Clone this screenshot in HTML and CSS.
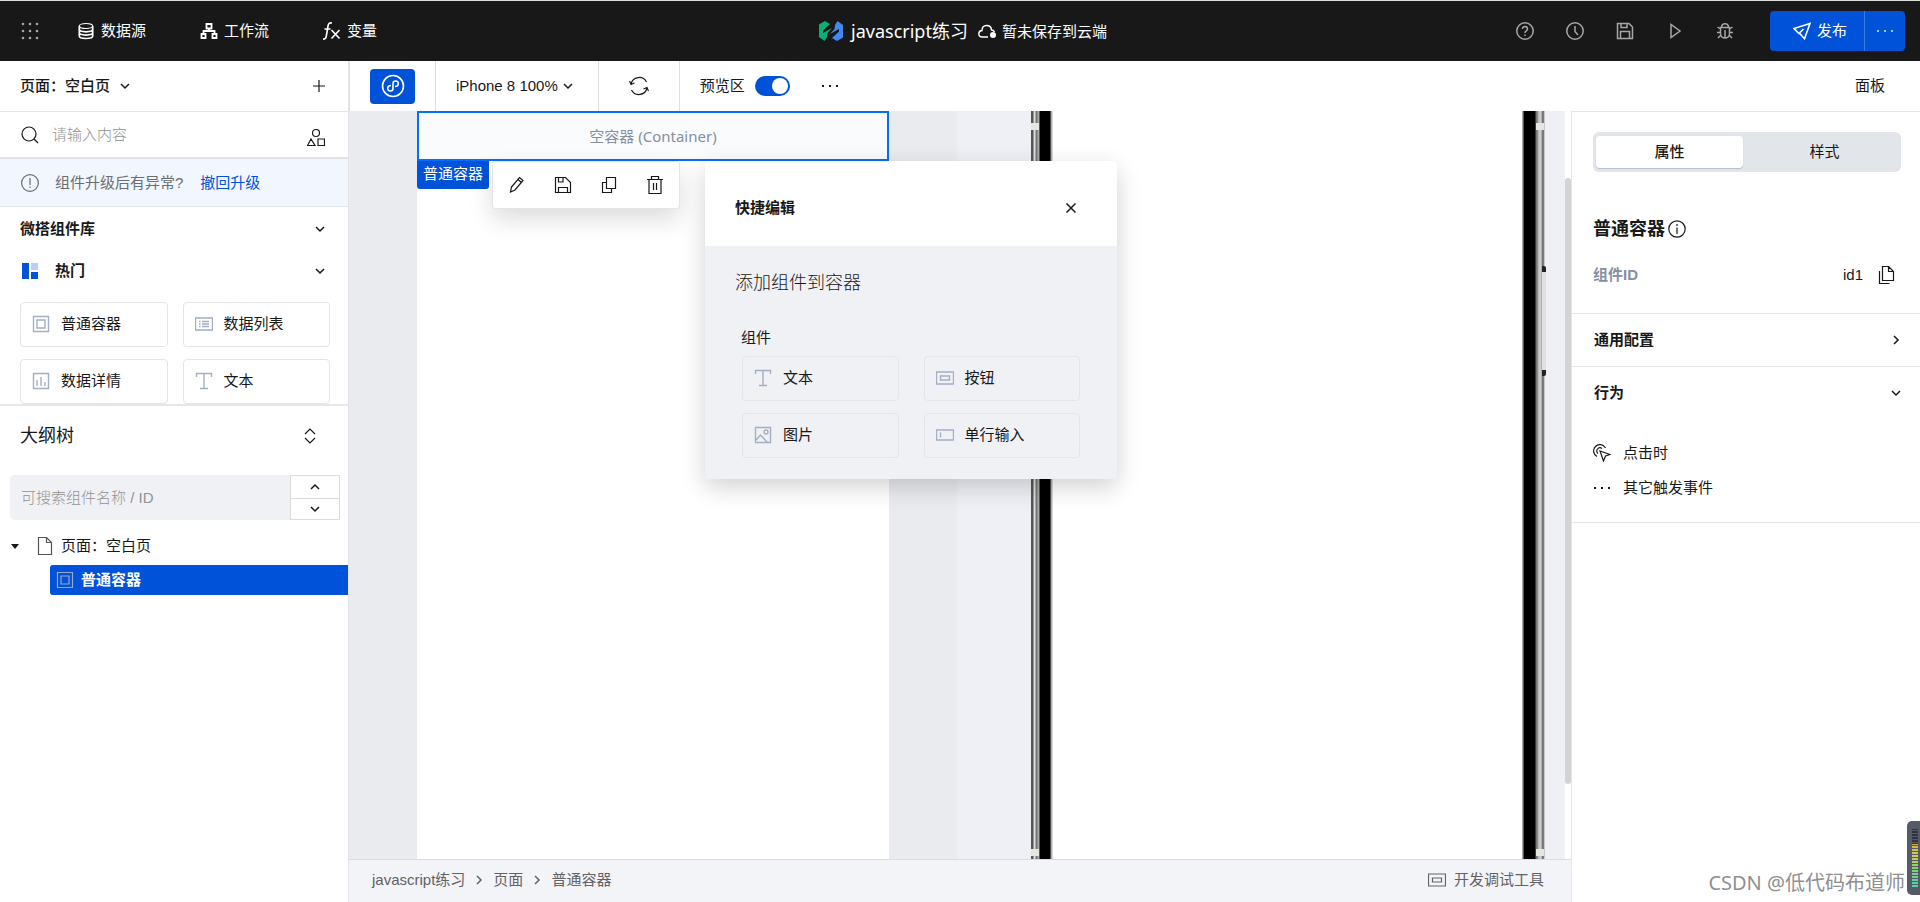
FILE: index.html
```html
<!DOCTYPE html>
<html lang="zh-CN">
<head>
<meta charset="utf-8">
<meta name="viewport" content="width=device-width, initial-scale=1">
<title>javascript练习</title>
<link rel="stylesheet" href="styles.css">
</head>
<body>
<svg class="sprite" aria-hidden="true">
  <symbol id="i-down" viewBox="0 0 10 10"><path d="M1 3l4 4 4-4"/></symbol>
  <symbol id="i-up" viewBox="0 0 10 10"><path d="M1 7l4-4 4 4"/></symbol>
  <symbol id="i-right" viewBox="0 0 10 10"><path d="M3 1l4 4-4 4"/></symbol>
  <symbol id="i-more" viewBox="0 0 18 18"><g fill="currentColor" stroke="none"><rect x="1" y="8" width="2" height="2"/><rect x="8" y="8" width="2" height="2"/><rect x="15" y="8" width="2" height="2"/></g></symbol>
  <symbol id="i-save" viewBox="0 0 18 18"><path d="M1.500 1.500h11.500l3.500 3.500v11.500h-15zM5 1.500v4h6v-4M4.500 16.500v-7h9v7"/></symbol>
  <symbol id="i-box" viewBox="0 0 18 18"><path d="M1.500 1.500h15v15h-15zM5 5h8v8H5z"/></symbol>
  <symbol id="i-text" viewBox="0 0 18 18"><path d="M1.500 5V1.500h15V5M9 1.500v15M5 16.500h8"/></symbol>
  <symbol id="i-list" viewBox="0 0 18 18"><path d="M.5 3h17v12H.5zM7 6.500h7M7 9h7M7 11.500h7M4 6.500h1.500M4 9h1.500M4 11.500h1.500"/></symbol>
  <symbol id="i-chart" viewBox="0 0 18 18"><path d="M1.500 1.500h15v15h-15zM5 14V8M9 14V5M13 14v-4"/></symbol>
  <symbol id="i-button" viewBox="0 0 18 18"><path d="M.5 3h17v12H.5zM4.500 7h9v4h-9z"/></symbol>
  <symbol id="i-image" viewBox="0 0 18 18"><path d="M1.500 1.500h15v15h-15zM2 14l4.500-5 7 7.500"/><circle cx="12" cy="6" r="2"/></symbol>
  <symbol id="i-input" viewBox="0 0 18 18"><path d="M.5 4h17v10H.5zM4.500 6.500v5"/></symbol>
</svg>

<header class="topbar">
  <nav class="topbar-nav" aria-label="主导航">
    <button class="plain muted" aria-label="应用"><svg class="icon" viewBox="0 0 18 18"><g fill="currentColor" stroke="none"><circle cx="2" cy="2" r="1.300"/><circle cx="9" cy="2" r="1.300"/><circle cx="16" cy="2" r="1.300"/><circle cx="2" cy="9" r="1.300"/><circle cx="9" cy="9" r="1.300"/><circle cx="16" cy="9" r="1.300"/><circle cx="2" cy="16" r="1.300"/><circle cx="9" cy="16" r="1.300"/><circle cx="16" cy="16" r="1.300"/></g></svg></button>
    <a href="#data"><svg class="icon" viewBox="0 0 18 18"><ellipse cx="9" cy="4" rx="6.700" ry="2.500"/><path stroke-width="1.700" d="M2.300 4v10c0 3.300 13.400 3.300 13.400 0V4M2.300 7.300c0 3.300 13.400 3.300 13.400 0M2.300 10.600c0 3.300 13.400 3.300 13.400 0"/></svg>数据源</a>
    <a href="#flow"><svg class="icon" viewBox="0 0 18 18"><path stroke-width="1.800" d="M6.500 2h5v4.500h-5zM1.500 12h4v4h-4zM12.500 12h4v4h-4zM9 6.500V9M3.500 12V9h11v3"/></svg>工作流</a>
    <a href="#var"><svg class="icon" viewBox="0 0 18 18"><path stroke-width="1.600" d="M0 17c2.500.5 3-1 3.500-4L5 4c.4-2.500 1.500-3.500 4-3M1.500 7h6M8.500 8l8 8.500M16.500 8l-8 8.500"/></svg>变量</a>
  </nav>
  <div class="topbar-title">
    <svg class="logo" viewBox="0 0 24 20"><path fill="#07b078" d="M0 3.500L6 0l5 3-7 6.500v2.500l9-5-4.500 5L8 16l-2.500 4L0 16z"/><path fill="#4288f0" d="M24 16.500L18 20l-5-3 7-6.500V8l-9 5 4.500-5L16 4l2.500-4L24 4z"/></svg>
    <h1>javascript练习</h1>
    <svg class="icon cloud" viewBox="0 0 18 18"><path stroke-width="1.400" d="M10 15H4C-.5 15 0 8.500 4 8.500 4 2 13 2 13.500 8c1.500 0 2.500.8 3 2"/><circle cx="15" cy="13" r="3" fill="currentColor" stroke="none"/></svg>
    <span>暂未保存到云端</span>
  </div>
  <div class="topbar-actions">
    <button class="plain" aria-label="帮助"><svg class="icon" viewBox="0 0 18 18"><circle cx="9" cy="9" r="8.200"/><path d="M6.500 7c0-3.500 5-3.200 5 0 0 2-2.500 1.800-2.500 4M9 12.500v1.500"/></svg></button>
    <button class="plain" aria-label="历史"><svg class="icon" viewBox="0 0 18 18"><circle cx="9" cy="9" r="8.200"/><path d="M9 4v5.500l3 3.500"/></svg></button>
    <button class="plain" aria-label="保存"><svg class="icon"><use href="#i-save"/></svg></button>
    <button class="plain" aria-label="运行"><svg class="icon" viewBox="0 0 18 18"><path d="M5 2.500v13l9-6.500z"/></svg></button>
    <button class="plain" aria-label="调试"><svg class="icon" viewBox="0 0 18 18"><path d="M5.500 5.500c0-5 7-5 7 0M4.500 5.500h9v6c0 6-9 6-9 0zM9 8v8M4.500 7L1.500 5M13.500 7l3-2M1 10.500h3.500M13.500 10.500H17M5 13l-3 3M13 13l3 3"/></svg></button>
    <div class="publish">
      <button><svg class="icon" viewBox="0 0 18 18"><path stroke-width="1.600" d="M17 1.500L1 6.500l5 5 1 .2 4.500 5zM6 11.500l4.500-4.500"/></svg>发布</button>
      <button aria-label="更多发布选项"><svg class="icon"><use href="#i-more"/></svg></button>
    </div>
  </div>
</header>

<div class="workspace">
  <aside class="sidebar">
    <div class="page-select">
      <button class="plain strong">页面：空白页<svg class="icon-s"><use href="#i-down"/></svg></button>
      <button class="plain" aria-label="新建页面"><svg class="icon-m" viewBox="0 0 12 12"><path d="M6 0v12M0 6h12"/></svg></button>
    </div>
    <div class="lib-search">
      <svg class="icon" viewBox="0 0 18 18"><circle cx="8" cy="8" r="7"/><path d="M13 13l4 4"/></svg>
      <input type="text" placeholder="请输入内容" aria-label="搜索组件">
      <button class="plain" aria-label="组件分类"><svg class="icon" viewBox="0 0 18 18"><circle cx="9" cy="4" r="3.500"/><path d="M.5 16.500L4 10l4 6.500zM11 10h6.500v6.500H11z"/></svg></button>
    </div>
    <div class="notice">
      <svg class="icon" viewBox="0 0 18 18"><circle cx="9" cy="9" r="8.400"/><path d="M9 4v7M9 12.500V14"/></svg>
      <span>组件升级后有异常?</span><a href="#revert">撤回升级</a>
    </div>
    <section class="library">
      <h2>微搭组件库<svg class="icon-s"><use href="#i-down"/></svg></h2>
      <h3><svg class="hot" viewBox="0 0 16 16"><path fill="#0052d9" d="M0 0h7v16H0zM9 9h7v7H9z"/><path fill="#b9d0ff" d="M9 0h7v7H9z"/></svg><span>热门</span><svg class="icon-s"><use href="#i-down"/></svg></h3>
      <div class="cards">
        <button class="card"><svg class="icon"><use href="#i-box"/></svg>普通容器</button>
        <button class="card"><svg class="icon"><use href="#i-list"/></svg>数据列表</button>
        <button class="card"><svg class="icon"><use href="#i-chart"/></svg>数据详情</button>
        <button class="card"><svg class="icon"><use href="#i-text"/></svg>文本</button>
      </div>
    </section>
    <section class="outline">
      <h2>大纲树<svg class="icon" viewBox="0 0 18 18"><path d="M4 7l5-5 5 5M4 11l5 5 5-5"/></svg></h2>
      <div class="outline-search">
        <input type="text" placeholder="可搜索组件名称 / ID" aria-label="搜索大纲树">
        <div class="stepper">
          <button aria-label="上一个"><svg class="icon-s"><use href="#i-up"/></svg></button>
          <button aria-label="下一个"><svg class="icon-s"><use href="#i-down"/></svg></button>
        </div>
      </div>
      <ul class="tree">
        <li><div class="tree-page"><svg class="caret" viewBox="0 0 8 5"><path fill="currentColor" stroke="none" d="M0 0h8L4 5z"/></svg><svg class="icon" viewBox="0 0 18 18"><path d="M2.500.5h8l5 5v12h-13zM10.500.5v5h5"/></svg>页面：空白页</div>
          <ul><li class="tree-item"><svg class="icon"><use href="#i-box"/></svg>普通容器</li></ul>
        </li>
      </ul>
    </section>
  </aside>

  <main class="main">
    <div class="toolbar">
      <div class="tool-cell"><button class="mode" aria-label="小程序"><svg viewBox="0 0 24 24"><circle cx="12" cy="12" r="10.500"/><path d="M10 11.500c-4.500 0-4 5.500-.8 5.500C11 17 12 16 12 14.500v-5C12 8 13 7 14.800 7c3.200 0 3.700 5.500-.8 5.500"/></svg></button></div>
      <div class="tool-cell device"><button class="plain">iPhone 8 100%<svg class="icon-s"><use href="#i-down"/></svg></button></div>
      <div class="tool-cell refresh"><button class="plain" aria-label="刷新"><svg class="icon-l" viewBox="0 0 20 20"><path d="M2 8a8.300 8.300 0 0 1 15.500-2M18 12a8.300 8.300 0 0 1-15.500 2M.5 5L2 8.500 5.500 7M19.500 15L18 11.500 14.500 13"/></svg></button></div>
      <div class="tool-cell preview"><label for="preview">预览区</label><input id="preview" class="switch" type="checkbox" checked><button class="plain" aria-label="更多"><svg class="icon"><use href="#i-more"/></svg></button></div>
      <button class="plain panel-toggle">面板</button>
    </div>

    <div class="content">
      <div class="stage">
        <div class="canvas">
          <div class="editor">
            <div class="page">
              <div class="container">空容器 (Container)</div>
              <span class="container-tag">普通容器</span>
              <div class="quick-tools">
                <button class="plain" aria-label="编辑"><svg class="icon" viewBox="0 0 18 18"><path d="M3.500 11l8-9.500 3.500 3-8 9.500-4.500 2zM10 3.500l3.500 3"/></svg></button>
                <button class="plain" aria-label="保存"><svg class="icon" viewBox="0 0 18 18"><path d="M1.500 1.500h10l5 5v10h-15zM4.500 1.500V6H9V1.500M4.500 16.500v-5h9v5"/></svg></button>
                <button class="plain" aria-label="复制"><svg class="icon" viewBox="0 0 18 18"><path d="M6.500 1.500h9v11h-9zM6.500 6.500h-4v10h9v-4"/></svg></button>
                <button class="plain" aria-label="删除"><svg class="icon" viewBox="0 0 18 18"><path d="M1 3.500h16M5.500 3.500v-3h7v3M3 3.500v14h12v-14M7.500 7v7M10.500 7v7"/></svg></button>
              </div>
              <section class="dialog" role="dialog" aria-labelledby="dialog-title">
                <div class="dialog-head"><h2 id="dialog-title">快捷编辑</h2><button class="plain" aria-label="关闭"><svg class="icon-s" viewBox="0 0 10 10"><path d="M.5.5l9 9M9.500.5l-9 9"/></svg></button></div>
                <div class="dialog-body">
                  <p class="lead">添加组件到容器</p>
                  <h3>组件</h3>
                  <div class="cards">
                    <button class="card"><svg class="icon"><use href="#i-text"/></svg>文本</button>
                    <button class="card"><svg class="icon"><use href="#i-button"/></svg>按钮</button>
                    <button class="card"><svg class="icon"><use href="#i-image"/></svg>图片</button>
                    <button class="card"><svg class="icon"><use href="#i-input"/></svg>单行输入</button>
                  </div>
                </div>
              </section>
            </div>
          </div>
          <div class="simulator">
            <div class="bezel bezel-left"></div>
            <div class="screen"></div>
            <div class="bezel bezel-right"><i class="side-key"></i></div>
          </div>
          <div class="scrollbar"><div class="thumb"></div></div>
        </div>
        <footer class="statusbar">
          <nav class="crumbs" aria-label="路径"><a href="#app">javascript练习</a><svg class="icon-s"><use href="#i-right"/></svg><a href="#page">页面</a><svg class="icon-s"><use href="#i-right"/></svg><a href="#id1">普通容器</a></nav>
          <button class="plain devtools"><svg class="icon"><use href="#i-button"/></svg>开发调试工具</button>
        </footer>
      </div>

      <aside class="props">
        <div class="props-intro">
          <div class="tabs"><button class="active">属性</button><button>样式</button></div>
          <h2>普通容器<svg class="icon" viewBox="0 0 18 18"><circle cx="9" cy="9" r="8.200"/><path d="M9 7.500V14M9 4v2"/></svg></h2>
          <div class="prop-row"><strong>组件ID</strong><span>id1</span><button class="plain" aria-label="复制ID"><svg class="icon" viewBox="0 0 18 18"><path d="M5.500.5h6l5 5v9h-11zM11.500.5v5h5M2.500 5v12.500h10"/></svg></button></div>
        </div>
        <h3 class="fold">通用配置<svg class="icon-s"><use href="#i-right"/></svg></h3>
        <section class="behavior">
          <h3 class="fold">行为<svg class="icon-s"><use href="#i-down"/></svg></h3>
          <button class="plain event"><svg class="icon" viewBox="0 0 18 18"><path d="M7 7l10 3.500-4.500 1.500L10.500 17zM4 12.500A6.300 6.300 0 1 1 12.500 4M5 9.500A3.200 3.200 0 1 1 9 4.500"/></svg>点击时</button>
          <button class="plain event"><svg class="icon"><use href="#i-more"/></svg>其它触发事件</button>
        </section>
      </aside>
    </div>
  </main>
</div>

<div class="watermark">CSDN @低代码布道师</div>
<div class="meter" aria-hidden="true"><i></i></div>
</body>
</html>
```

FILE: styles.css
```css
:root {
  --blue: #0052d9;
  --ink: #181818;
  --line: #e3e5ea;
  --grey: #84909f;
  --arial: "Liberation Sans", "Noto Sans CJK SC", sans-serif;
  --noto: "Noto Sans", "Noto Sans CJK SC", sans-serif;
}
* { box-sizing: border-box; }
body {
  margin: 0;
  min-height: 100vh;
  display: flex;
  flex-direction: column;
  position: relative;
  overflow: hidden;
  background: #fff;
  color: var(--ink);
  font: 15px/22px var(--arial);
}
h1, h2, h3, p, ul { margin: 0; padding: 0; font-size: 15px; font-weight: 700; list-style: none; }
ul { font-weight: 400; }
a { color: inherit; text-decoration: none; }
button, input { font: inherit; color: inherit; margin: 0; }
button { cursor: pointer; white-space: nowrap; }
svg { fill: none; stroke: currentColor; stroke-width: 1.2; flex: none; display: block; }
.sprite { position: absolute; width: 0; height: 0; }
.icon { width: 18px; height: 18px; }
.icon-l { width: 20px; height: 20px; }
.icon-m { width: 12px; height: 12px; }
.icon-s { width: 10px; height: 10px; stroke-width: 1.5; }
.plain { border: 0; padding: 0; background: none; display: flex; align-items: center; }
.strong { font-weight: 500; }

/* Top bar */
.topbar {
  height: 61px;
  display: grid;
  grid-template-columns: 1fr auto 1fr;
  align-items: center;
  padding: 0 15px 0 21px;
  border-top: 1px solid #d9dfda;
  background: #181818;
  color: #fff;
}
.topbar-nav, .topbar-nav a, .topbar-title, .topbar-actions, .publish, .publish button { display: flex; align-items: center; }
.topbar-nav { gap: 54px; }
.topbar-nav a { gap: 6px; }
.topbar-nav .plain { width: 18px; margin-right: -16px; }
.topbar-nav .muted, .topbar-actions { color: #a6a6a6; }
.topbar-title { font-family: var(--noto); }
.topbar-title h1 { font-size: 18px; font-weight: 400; margin: 0 10px 0 8px; }
.logo { width: 24px; height: 20px; stroke: none; }
.cloud { margin-right: 6px; }
.topbar-actions { justify-content: flex-end; gap: 32px; }
.topbar-actions svg { stroke-width: 1.5; }
.publish { color: #fff; margin-left: 4px; }
.publish button { height: 40px; border: 0; background: var(--blue); padding: 0 17px 0 23px; gap: 6px; border-radius: 4px 0 0 4px; }
.publish button + button { padding: 0 11px; border-left: 1px solid #3a7be6; border-radius: 0 4px 4px 0; color: #a9c6f7; }

.workspace { flex: 1; display: flex; }

/* Left sidebar */
.sidebar { flex: none; width: 349px; border-right: 1px solid var(--line); }
.page-select, .lib-search, .notice { display: flex; align-items: center; }
.page-select { justify-content: space-between; height: 51px; padding: 0 23px 0 20px; border-bottom: 1px solid var(--line); }
.page-select .strong { gap: 10px; }
.lib-search { height: 47px; padding: 0 23px 0 21px; border-bottom: 2px solid #dfe2e8; }
.lib-search input { flex: 1; min-width: 0; margin-left: 13px; border: 0; padding: 0; outline: 0; background: none; }
.lib-search .plain { padding-top: 6px; }
input::placeholder { color: #929292; opacity: 1; font-weight: 300; }
.notice { height: 48px; padding-left: 21px; border-bottom: 1px solid #e0e5ee; background: #f2f6ff; color: #6a6d73; }
.notice span { margin: 0 17px 0 16px; }
.notice a { color: var(--blue); }
.library { padding: 11px 18px 0 20px; border-bottom: 2px solid #e7e7e7; }
.library h2, .library h3 { display: flex; align-items: center; padding-right: 5px; height: 22px; }
.library h2 { justify-content: space-between; margin-bottom: 20px; }
.library h3 { gap: 17px; padding-left: 2px; margin-bottom: 20px; }
.library h3 span { flex: 1; }
.hot { width: 16px; height: 16px; stroke: none; }
.cards { display: grid; grid-template-columns: 1fr 1fr; gap: 12px 15px; }
.card {
  height: 45px;
  display: flex;
  align-items: center;
  gap: 11px;
  padding: 0 11px 1px;
  border: 1px solid var(--line);
  border-radius: 4px;
  background: none;
}
.card .icon { color: #a3afc2; stroke-width: 1.400; }
.outline h2 { display: flex; justify-content: space-between; align-items: center; height: 60px; padding: 0 29px 0 20px; font-size: 18px; font-weight: 400; }
.outline-search { display: flex; margin: 9px 8px 15px 10px; height: 45px; }
.outline-search input { flex: 1; min-width: 0; border: 0; border-radius: 5px 0 0 5px; background: #f0f1f5; padding: 0 11px; outline: 0; }
.stepper { width: 50px; display: grid; grid-template-rows: 1fr 1fr; border: 1px solid #dcdcdc; }
.stepper button { border: 0; background: #fff; display: grid; place-items: center; padding: 0; }
.stepper button + button { border-top: 1px solid #dcdcdc; }
.tree { font-weight: 400; }
.tree-page { display: flex; align-items: center; height: 22px; padding-left: 11px; }
.tree-page .icon { margin: 0 7px 0 17px; color: #555; }
.caret { width: 8px; height: 5px; }
.tree-item { display: flex; align-items: center; gap: 7px; height: 30px; margin: 8px 0 0 50px; padding-left: 6px; border-radius: 3px 0 0 3px; background: var(--blue); color: #fff; font-weight: 700; }
.tree-item .icon { color: #9aa9c4; }

/* Toolbar */
.main { flex: 1; min-width: 0; display: flex; flex-direction: column; }
.toolbar { height: 50px; display: flex; align-items: center; border-left: 1px solid #dcdfe6; padding-right: 35px; }
.tool-cell { height: 50px; display: flex; align-items: center; padding: 0 20px; border-right: 1px solid #dcdfe6; }
.tool-cell .plain { gap: 5px; }
.tool-cell.device { padding: 0 25px 0 20px; }
.tool-cell.refresh { padding: 0 30px; }
.tool-cell.preview { border: 0; }
.mode { width: 45px; height: 35px; border: 0; border-radius: 4px; background: var(--blue); color: #fff; display: grid; place-items: center; padding: 0; }
.mode svg { width: 24px; height: 24px; stroke-width: 1.600; }
.switch { appearance: none; width: 35px; height: 20px; margin: 0 31px 0 10px; padding: 2px; border-radius: 10px; background: var(--blue); }
.switch::after { content: ""; display: block; width: 16px; height: 16px; margin-left: auto; border-radius: 50%; background: #fff; }
.panel-toggle { margin-left: auto; }

.content { flex: 1; display: flex; }
.stage { flex: 1; min-width: 0; display: flex; flex-direction: column; }
.canvas { flex: 1; display: grid; grid-template-columns: 1fr 1fr 6px; }

/* Editing page */
.editor { display: flex; justify-content: center; background: #eaebef; }
.page { width: 472px; position: relative; background: #fff; }
.container { height: 50px; border: 2px solid #006fff; background: #fafbfd; color: var(--grey); display: grid; place-items: center; font-family: var(--noto); }
.container-tag { position: absolute; left: 0; top: 50px; padding: 2px 6px 4px; border-radius: 0 0 3px 3px; background: var(--blue); color: #fff; }
.quick-tools { position: absolute; left: 75px; top: 50px; display: flex; gap: 28px; padding: 14px 15px; border: 1px solid var(--line); border-radius: 3px; background: #fff; box-shadow: 0 10px 24px rgba(0, 0, 0, .14); }
.dialog { position: absolute; z-index: 2; left: 288px; top: 50px; width: 412px; border-radius: 4px; background: #f0f1f5; box-shadow: 0 8px 24px rgba(0, 0, 0, .18); }
.dialog-head { height: 85px; display: flex; align-items: center; justify-content: space-between; padding: 8px 41px 0 30px; border-radius: 4px 4px 0 0; background: #fff; }
.dialog-body { padding: 24px 37px 21px; }
.dialog .lead { margin: 0 0 31px -7px; font-size: 18px; line-height: 26px; font-weight: 300; }
.dialog h3 { margin: 0 0 7px -1px; font-weight: 400; }
.dialog .cards { column-gap: 25px; }

/* Phone preview */
.simulator { display: flex; padding: 0 20px 0 74px; background: #eff0f5; }
.screen { flex: 1; background: #fff; }
.bezel { width: 22px; position: relative; background: linear-gradient(90deg, #555 0 2px, #ddd 3px 4px, #777 5px 6px, #aaa 7px 8px, #000 9px 19px, #999 20px, #eee 22px); }
.bezel-right { width: 23px; background: linear-gradient(90deg, #aaa 0 1px, #000 2px 13px, #777 14px 15px, #ccc 17px 19px, #555 21px, #eee 23px); }
.bezel::before, .bezel::after { content: ""; position: absolute; left: 0; top: 12px; width: 8px; height: 7px; background: #e6e6e0; }
.bezel::after { top: auto; bottom: 3px; }
.bezel-right::before, .bezel-right::after { left: 14px; }
.side-key { position: absolute; left: 20px; top: 155px; width: 4px; height: 110px; border: solid #222; border-width: 6px 0; background: #e2dfe2; border-radius: 0 2px 2px 0; }
.scrollbar { padding: 67px 0 75px; display: flex; background: #fff; }
.thumb { flex: 1; border-radius: 3px; background: #d3d3d3; }

.statusbar { height: 43px; display: flex; align-items: center; justify-content: space-between; padding: 0 27px 2px 23px; border-top: 1px solid #d9dce4; background: #f3f4f7; color: #5f6268; }
.crumbs { display: flex; align-items: center; gap: 9px; }
.devtools { gap: 8px; }

/* Properties */
.props { flex: none; width: 349px; border-left: 1px solid var(--line); border-top: 1px solid var(--line); }
.props-intro { padding: 20px 19px 27px 21px; }
.tabs { display: grid; grid-template-columns: 1fr 1fr; gap: 8px; padding: 4px 3px; height: 40px; border-radius: 6px; background: #e2e6eb; }
.tabs button { border: 0; border-radius: 4px; background: none; padding: 0; }
.tabs .active { background: #fff; box-shadow: 0 1px 1px #b3bdcc; font-weight: 500; }
.props-intro h2 { display: flex; align-items: center; gap: 3px; margin: 44px 0 22px; font-size: 18px; line-height: 26px; }
.prop-row { display: flex; align-items: center; }
.prop-row strong { flex: 1; color: var(--grey); }
.prop-row span { margin-right: 14px; }
.prop-row .plain { margin-right: 6px; }
.fold { display: flex; align-items: center; justify-content: space-between; height: 53px; padding: 0 19px 0 22px; border-top: 1px solid var(--line); }
.behavior { padding-bottom: 23px; border-bottom: 1px solid var(--line); }
.behavior .fold { margin-bottom: 23px; }
.event { gap: 12px; margin: 0 21px 13px; }
.event:last-child { margin-bottom: 0; }

/* Overlays */
.watermark { position: absolute; right: 15px; bottom: 5px; font: 20px/28px var(--noto); color: #8f8f8f; }
.meter { position: absolute; right: 0; bottom: 7px; width: 13px; height: 74px; padding: 8px 2px 8px 5px; border-radius: 5px 0 0 5px; background: #555c68; }
.meter i { display: block; height: 100%; background: repeating-linear-gradient(0deg, transparent 0 2px, #555c68 2px 3px), linear-gradient(#2e333c 0 25%, #d9a848 26%, #d4cf58 45%, #83cf78 70%, #50d0b8); }
```
